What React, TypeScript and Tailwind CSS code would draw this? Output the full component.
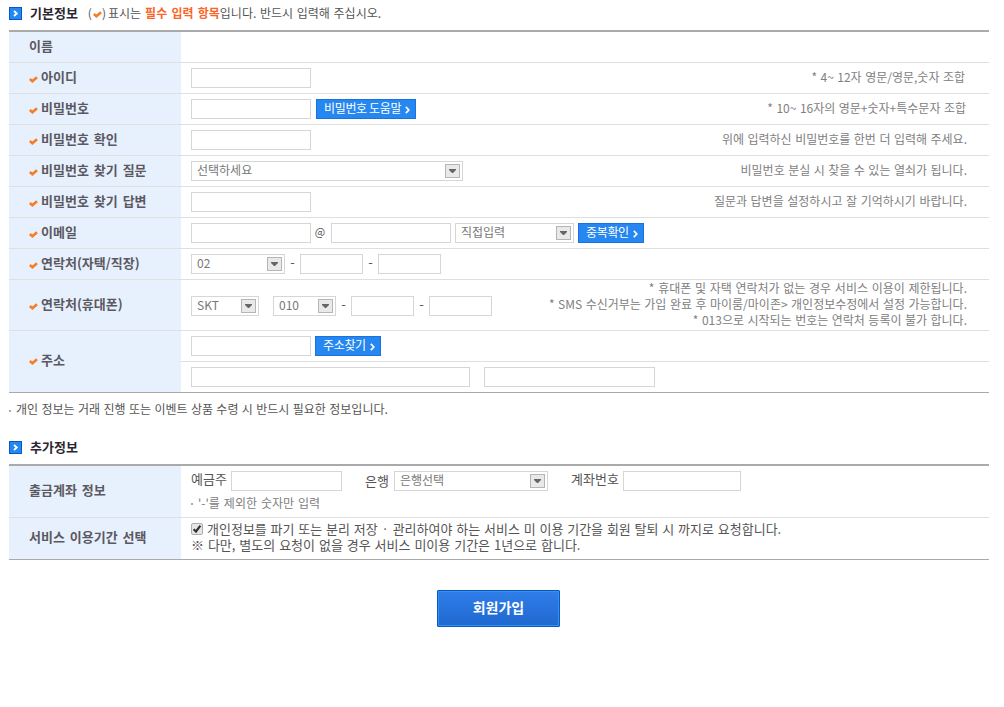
import type { ReactNode } from "react";

function Check() {
  return (
    <svg width="9" height="7" viewBox="0 0 9 7" className="shrink-0">
      <path d="M0.8 3 L3.4 5.2 L8 1.2" fill="none" stroke="#f77d24" strokeWidth="2.6" />
    </svg>
  );
}

function Bullet() {
  return (
    <svg width="13" height="13" viewBox="0 0 13 13" className="shrink-0">
      <rect x="0.5" y="0.5" width="12" height="12" fill="#2388f0" stroke="#0757c8" />
      <path d="M5 4 L7.8 6.5 L5 9" fill="none" stroke="#fff" strokeWidth="1.8" />
    </svg>
  );
}

function Field({ className }: { className: string }) {
  return <input type="text" className={`block h-5 shrink-0 border border-[#d6d6d6] bg-white px-1 outline-none ${className}`} />;
}

function Select({ label, className }: { label: string; className: string }) {
  return (
    <button type="button" className={`flex h-5 shrink-0 items-center justify-between border border-[#d6d6d6] bg-white pr-0.5 pl-[5px] text-[12px] leading-[18px] text-[#777] ${className}`}>
      <span className="-mt-0.5 whitespace-nowrap">{label}</span>
      <svg width="15" height="14" viewBox="0 0 15 14" className="shrink-0">
        <rect x="0.5" y="0.5" width="14" height="13" fill="#e9e9e9" stroke="#b5b5b5" />
        <path d="M4 5 H11 V6 L8 9 H7 L4 6 Z" fill="#666" />
      </svg>
    </button>
  );
}

function BlueButton({ label, className }: { label: string; className: string }) {
  return (
    <button type="button" className={`flex h-5 shrink-0 items-center justify-between border border-[#1a71df] bg-[#2587ef] pr-[5px] pl-[7px] text-[12px] leading-[18px] text-white ${className}`}>
      <span className="-mt-0.5 tracking-[-0.35px] whitespace-nowrap">{label}</span>
      <svg width="5" height="8" viewBox="0 0 5 8" className="mt-px shrink-0">
        <path d="M0.8 0.9 L3.8 4 L0.8 7.1" fill="none" stroke="#fff" strokeWidth="1.7" />
      </svg>
    </button>
  );
}

function Label({ children, required = true, className = "" }: { children: ReactNode; required?: boolean; className?: string }) {
  return (
    <div className={`flex w-[172px] shrink-0 items-center bg-[#e7f1fe] pl-5 text-[13px] font-bold text-[#5c5861] ${className}`}>
      {required && (
        <span className="mt-0.5 mr-[3px]">
          <Check />
        </span>
      )}
      <span className="-mt-0.5 leading-4 whitespace-nowrap [word-spacing:2px]">{children}</span>
    </div>
  );
}

function Row({ label, required, children, hint, hintClass = "" }: { label: string; required?: boolean; children?: ReactNode; hint?: string; hintClass?: string }) {
  return (
    <div className="flex h-[31px] border-b border-[#dfdfdf]">
      <Label required={required}>{label}</Label>
      <div className="flex flex-1 items-center pl-2.5">
        {children}
        {hint && <p className={`-mt-0.5 mr-[22px] ml-auto text-[12px] leading-4 whitespace-nowrap text-[#808080] ${hintClass}`}>{hint}</p>}
      </div>
    </div>
  );
}

function Dash({ className }: { className: string }) {
  return <span className={`flex shrink-0 justify-center text-[13px] leading-4 ${className}`}>-</span>;
}

export default function App() {
  return (
    <main className="h-[707px] w-[1004px] overflow-hidden bg-white pr-[15px] pl-[9px] font-['Noto_Sans_CJK_KR',sans-serif] text-[#555]">
      <header className="flex h-[30px] items-center pb-[3px]">
        <Bullet />
        <h2 className="-mt-0.5 ml-2 text-[13px] leading-4 font-bold text-[#2b2730]">기본정보</h2>
        <p className="-mt-0.5 ml-[10px] flex items-center text-[12px] leading-4 whitespace-pre">
          <span>(</span>
          <span className="mt-1 ml-px"><Check /></span>
          <span className="mr-0.5">)</span>
          <span>표시는</span>
          <b className="ml-1 text-[#fa6428] [word-spacing:1.5px]">필수 입력 항목</b>
          <span className="[word-spacing:1px]">입니다. 반드시 입력해 주십시오.</span>
        </p>
      </header>

      <section className="border-t-2 border-b border-[#aaa]">
        <Row label="이름" required={false} />
        <Row label="아이디" hint="* 4~ 12자 영문/영문,숫자 조합" hintClass="pr-0.5 [word-spacing:0.8px]">
          <Field className="w-[120px]" />
        </Row>
        <Row label="비밀번호" hint="* 10~ 16자의 영문+숫자+특수문자 조합" hintClass="pr-px [word-spacing:0.8px]">
          <Field className="w-[120px]" />
          <BlueButton label="비밀번호 도움말" className="ml-[5px] w-[100px]" />
        </Row>
        <Row label="비밀번호 확인" hint="위에 입력하신 비밀번호를 한번 더 입력해 주세요." hintClass="[word-spacing:0.8px]">
          <Field className="w-[120px]" />
        </Row>
        <Row label="비밀번호 찾기 질문" hint="비밀번호 분실 시 찾을 수 있는 열쇠가 됩니다." hintClass="[word-spacing:0.8px]">
          <Select label="선택하세요" className="w-[272px]" />
        </Row>
        <Row label="비밀번호 찾기 답변" hint="질문과 답변을 설정하시고 잘 기억하시기 바랍니다." hintClass="[word-spacing:0.9px]">
          <Field className="w-[120px]" />
        </Row>
        <Row label="이메일">
          <Field className="w-[120px]" />
          <span className="-mt-1 w-5 pr-0.5 text-center text-[11px]">@</span>
          <Field className="w-[120px]" />
          <Select label="직접입력" className="ml-1 w-[119px]" />
          <BlueButton label="중복확인" className="ml-1 w-[66px]" />
        </Row>
        <Row label="연락처(자택/직장)">
          <Select label="02" className="w-[94px]" />
          <Dash className="-mt-1 w-[15px]" />
          <Field className="w-[63px]" />
          <Dash className="-mt-1 w-[15px]" />
          <Field className="w-[63px]" />
        </Row>
        <div className="flex h-[51px] border-b border-[#dfdfdf]">
          <Label>연락처(휴대폰)</Label>
          <div className="flex flex-1 items-center pt-0.5 pl-2.5">
            <Select label="SKT" className="w-[68px]" />
            <Select label="010" className="ml-3.5 w-[63px]" />
            <Dash className="-mt-1 w-[15px]" />
            <Field className="w-[63px]" />
            <Dash className="-mt-1 w-[15px]" />
            <Field className="w-[63px]" />
            <div className="-mt-1 mr-[22px] ml-auto text-right text-[12px] leading-4 whitespace-nowrap text-[#808080]">
              <p className="[word-spacing:1px]">* 휴대폰 및 자택 연락처가 없는 경우 서비스 이용이 제한됩니다.</p>
              <p className="[word-spacing:0.8px]">* SMS 수신거부는 가입 완료 후 마이룸/마이존&gt; 개인정보수정에서 설정 가능합니다.</p>
              <p className="[word-spacing:0.8px]">* 013으로 시작되는 번호는 연락처 등록이 불가 합니다.</p>
            </div>
          </div>
        </div>
        <div className="flex h-[61px]">
          <Label className="pb-0.5">주소</Label>
          <div className="flex-1">
            <div className="flex h-[31px] items-center border-b border-[#dfdfdf] pl-2.5">
              <Field className="w-[120px]" />
              <BlueButton label="주소찾기" className="ml-1 w-[66px]" />
            </div>
            <div className="flex h-[30px] items-center pl-2.5">
              <Field className="w-[279px]" />
              <Field className="ml-3.5 w-[171px]" />
            </div>
          </div>
        </div>
      </section>

      <p className="mt-[9px] flex h-4 items-center text-[12px] leading-4 whitespace-nowrap">
        <span className="mt-0.5 mr-[5px] size-0.5 bg-[#aaa]" />
        <span className="-mt-0.5 [word-spacing:0.7px]">개인 정보는 거래 진행 또는 이벤트 상품 수령 시 반드시 필요한 정보입니다.</span>
      </p>

      <header className="mt-[23px] flex h-[23px] items-start">
        <Bullet />
        <h2 className="-mt-0.5 ml-2 text-[13px] leading-4 font-bold text-[#2b2730]">추가정보</h2>
      </header>

      <section className="border-t-2 border-b border-[#aaa]">
        <div className="flex h-[52px] border-b border-[#dfdfdf]">
          <Label required={false} className="pb-0.5">출금계좌 정보</Label>
          <div className="flex-1 pt-[5px] pl-2.5">
            <div className="flex h-5 items-center text-[13px] leading-4 whitespace-nowrap">
              <span className="-mt-1 w-10">예금주</span>
              <Field className="w-[111px]" />
              <span className="ml-[23px] w-[29px]">은행</span>
              <Select label="은행선택" className="w-[154px]" />
              <span className="-mt-1 ml-[23px] w-[52px]">계좌번호</span>
              <Field className="w-[118px]" />
            </div>
            <p className="mt-1 flex items-center text-[12px] leading-4 text-[#808080]">
              <span className="mt-0.5 mr-[5px] size-0.5 bg-[#aaa]" />
              <span className="[word-spacing:1.3px]">'-'를 제외한 숫자만 입력</span>
            </p>
          </div>
        </div>
        <div className="flex h-[41px]">
          <Label required={false} className="pb-0.5">서비스 이용기간 선택</Label>
          <div className="flex flex-1 flex-col pt-[3px] pl-2.5 text-[13px] leading-4 whitespace-nowrap">
            <label className="flex h-4 items-center">
              <svg width="12" height="12" viewBox="0 0 12 12" className="mr-1 shrink-0">
                <rect x="0.5" y="0.5" width="11" height="11" rx="1.5" fill="#e6e6e6" stroke="#adadad" />
                <path d="M2.6 6.2 L5 8.5 L9.4 2.7" fill="none" stroke="#333" strokeWidth="2.2" />
              </svg>
              <span className="[word-spacing:0.9px]">개인정보를 파기 또는 분리 저장 · 관리하여야 하는 서비스 미 이용 기간을 회원 탈퇴 시 까지로 요청합니다.</span>
            </label>
            <p className="h-4 [word-spacing:1px]">※ 다만, 별도의 요청이 없을 경우 서비스 미이용 기간은 1년으로 합니다.</p>
          </div>
        </div>
      </section>

      <div className="flex pt-[30px] pl-[428px]">
        <button type="button" className="h-[37px] w-[123px] rounded-[1px] border border-[#0757c4] bg-linear-to-b from-[#307eea] to-[#1f68cf] pb-0.5 text-[14px] font-bold text-white inset-ring inset-ring-[#3492ec]">회원가입</button>
      </div>
    </main>
  );
}
